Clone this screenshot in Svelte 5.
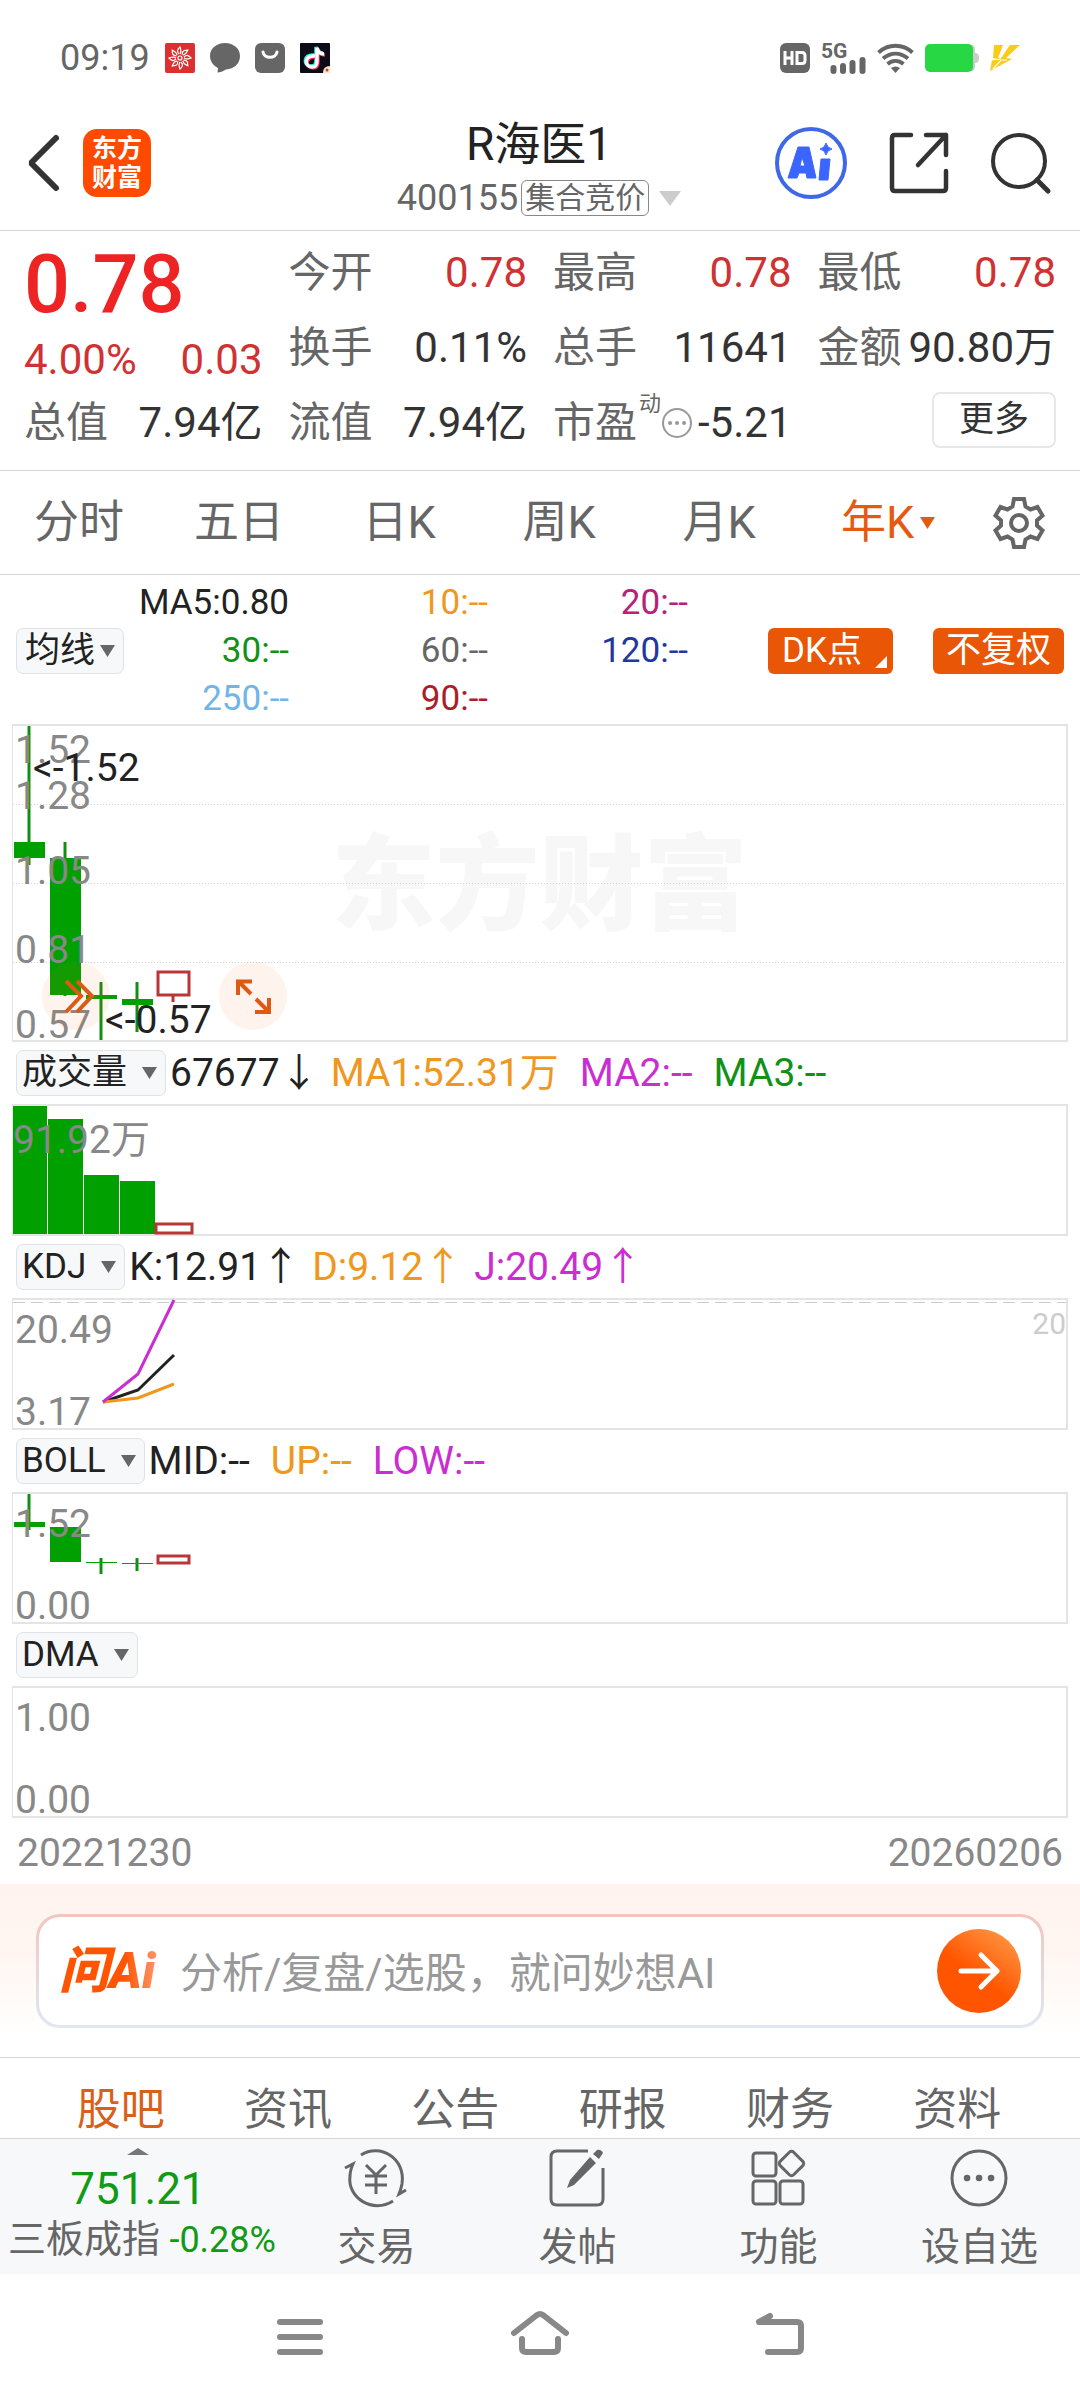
<script>
  let period = $state("年K");
  let section = $state("股吧");
  let question = $state("");

  const periods = ["分时", "五日", "日K", "周K", "月K", "年K"];
  const sections = ["股吧", "资讯", "公告", "研报", "财务", "资料"];

  const columns = [
    [
      { label: "今开", value: "0.78", up: true },
      { label: "换手", value: "0.11%" },
      { label: "流值", value: "7.94亿" },
    ],
    [
      { label: "最高", value: "0.78", up: true },
      { label: "总手", value: "11641" },
      { label: "市盈", value: "-5.21", dynamic: true },
    ],
    [
      { label: "最低", value: "0.78", up: true },
      { label: "金额", value: "90.80万" },
    ],
  ];

  const averages = [
    { text: "MA5:0.80", tone: "black" },
    { text: "10:--", tone: "orange" },
    { text: "20:--", tone: "plum" },
    { text: "30:--", tone: "green" },
    { text: "60:--", tone: "gray" },
    { text: "120:--", tone: "navy" },
    { text: "250:--", tone: "sky" },
    { text: "90:--", tone: "crimson" },
  ];

  const overlays = ["均线", "BOLL"];
  const indicators = ["成交量", "KDJ", "BOLL", "DMA"];

  let overlay = $state("均线");
  let panels = $state([
    {
      name: "成交量",
      top: "91.92万",
      values: [
        { text: "67677", arrow: "↓", tone: "black" },
        { text: "MA1:52.31万", tone: "orange" },
        { text: "MA2:--", tone: "magenta" },
        { text: "MA3:--", tone: "green" },
      ],
      bars: [
        { x: 0, y: 0, w: 34 },
        { x: 35, y: 13, w: 35 },
        { x: 71, y: 69, w: 35 },
        { x: 107, y: 75, w: 35 },
      ],
    },
    {
      name: "KDJ",
      top: "20.49",
      bottom: "3.17",
      values: [
        { text: "K:12.91", arrow: "↑", tone: "black" },
        { text: "D:9.12", arrow: "↑", tone: "orange" },
        { text: "J:20.49", arrow: "↑", tone: "magenta" },
      ],
      lines: [
        { points: "90,102 125,90 161,55", tone: "black" },
        { points: "90,102 125,98 161,84", tone: "orange" },
        { points: "90,102 125,74 161,0", tone: "magenta" },
      ],
    },
    {
      name: "BOLL",
      top: "1.52",
      bottom: "0.00",
      values: [
        { text: "MID:--", tone: "black" },
        { text: "UP:--", tone: "orange" },
        { text: "LOW:--", tone: "magenta" },
      ],
      candles: [
        { x: 1, open: 28, close: 33, high: 0, low: 36 },
        { x: 37, open: 33, close: 68, high: 33, low: 68 },
        { x: 73, open: 68, close: 69, high: 64, low: 80 },
        { x: 109, open: 69, close: 70, high: 64, low: 77 },
        { x: 144, open: 61, close: 70, high: 61, low: 70, up: true },
      ],
    },
    { name: "DMA", top: "1.00", bottom: "0.00", values: [] },
  ]);

  const candles = [
    { x: 1, open: 116, close: 132, high: 0, low: 139 },
    { x: 37, open: 132, close: 269, high: 116, low: 270 },
    { x: 73, open: 269, close: 273, high: 256, low: 314 },
    { x: 109, open: 273, close: 279, high: 256, low: 306 },
    { x: 144, open: 245, close: 270, high: 245, low: 276, up: true },
  ];
</script>

{#snippet triangle()}
  <svg class="triangle" width="15" height="12" viewBox="0 0 15 12" aria-hidden="true">
    <path d="M0 0h15L7.500 12z" fill="currentColor" />
  </svg>
{/snippet}

{#snippet candle(c)}
  {#if c.up}
    <path d="M{c.x + 16} {c.close}V{c.low}" class="wick up" />
    <rect x={c.x + 1} y={c.open + 1} width="31" height={c.close - c.open - 2} class="hollow" />
  {:else}
    <path d="M{c.x + 15} {c.high}V{c.low}" class="wick" />
    <rect x={c.x} y={c.open} width="31" height={c.close - c.open} class="solid" />
  {/if}
{/snippet}

<main>
  <div class="status">
    <div class="status-side">
      <span>09:19</span>
      <svg width="30" height="30" viewBox="0 0 30 30">
        <rect width="30" height="30" rx="2" fill="#dc3030" />
        <g fill="none" stroke="#fff" stroke-width="1.200">
          {#each [0, 45, 90, 135, 180, 225, 270, 315] as angle}
            <path d="M14 11c-3-3-1-5 1-7 1 3 2 4 0 7" transform="rotate({angle} 15 15)" />
          {/each}
          <circle cx="15" cy="15" r="2" />
        </g>
      </svg>
      <svg width="30" height="30" viewBox="0 0 30 30">
        <path d="M15 0c8.500 0 15 5.500 15 13s-6 13-14 13.500c-3 2-6 3-8.500 3l.5-4.500C3 22.500 0 18 0 13 0 5.500 6.500 0 15 0z" fill="#666" />
      </svg>
      <svg width="30" height="30" viewBox="0 0 30 30">
        <rect width="30" height="30" rx="6" fill="#666" />
        <path d="M8 9c1 7 13 7 14 0" fill="none" stroke="#fff" stroke-width="3" stroke-linecap="round" />
      </svg>
      <svg width="30" height="30" viewBox="0 0 30 30">
        <rect width="30" height="30" rx="1" fill="#0b0b18" />
        <g fill="none" stroke-width="3.500">
          <path d="M15 13c-11-1-11 11-3 11 4 0 5-2 5-6V5c1 4 3 6 7 6" stroke="#25f4ee" transform="translate(-1 -1)" />
          <path d="M15 13c-11-1-11 11-3 11 4 0 5-2 5-6V5c1 4 3 6 7 6" stroke="#fe2c55" transform="translate(1 1)" />
          <path d="M15 13c-11-1-11 11-3 11 4 0 5-2 5-6V5c1 4 3 6 7 6" stroke="#fff" />
        </g>
        <path d="M30 23v7h-7q0-7 7-7z" fill="#fde3c8" />
        <circle cx="27" cy="27" r="1.500" fill="#d04030" />
      </svg>
    </div>
    <div class="status-side right">
      <svg width="30" height="30" viewBox="0 0 30 30">
        <rect width="30" height="30" rx="6" fill="#666" />
        <path d="M5 8v14M12 8v14M5 15h7M17 9.500h5q3 0 3 3v5q0 3-3 3h-5z" fill="none" stroke="#fff" stroke-width="3" />
      </svg>
      <svg class="signal" width="45" height="31" viewBox="0 0 45 31">
        <text x="0" y="15" class="signal-text">5G</text>
        <path d="M12.500 25v3M22 23v5M31.500 20v8M41.500 17v11" stroke="#666" stroke-width="6" stroke-linecap="round" />
      </svg>
      <svg width="37" height="30" viewBox="0 0 37 30">
        <g fill="none" stroke="#666" stroke-width="4">
          <path d="M1.500 9.500c10-9 24-9 34 0" />
          <path d="M6 15.500c8-6.500 17-6.500 25 0" />
          <path d="M10.500 21c5-4 11-4 16 0" />
        </g>
        <path d="M14 25q4.500-3 9 0l-4.500 5z" fill="#666" />
      </svg>
      <svg width="54" height="28" viewBox="0 0 54 28">
        <path d="M46 1q4 0 4 5v3q4 0 4 5t-4 5v3q0 5-4 5z" fill="#ccc" />
        <rect width="48" height="28" rx="5" fill="#27d844" />
      </svg>
      <svg width="30" height="26" viewBox="0 0 30 26">
        <path d="M4 0h9L8 13l4-1L17 4l3-4h10L16 13l6 1L0 26 2 15l5-1-4-1z" fill="#facb18" />
        <path d="M1 15l9-1 4-13M3 24l8-9h6" fill="none" stroke="#fff" stroke-width="1.200" />
      </svg>
    </div>
  </div>

  <header>
    <div class="header-side">
      <button class="icon" aria-label="返回">
        <svg width="32" height="56" viewBox="0 0 32 56">
          <path d="M29 3L4 28l25 25" fill="none" stroke="#333" stroke-width="6" stroke-linecap="round" stroke-linejoin="bevel" />
        </svg>
      </button>
      <a class="brand" href="#home">东方<br />财富</a>
    </div>
    <div class="title">
      <h1>R海医1</h1>
      <p>
        400155<span class="auction">集合竞价</span>
        <svg width="22" height="15" viewBox="0 0 22 15"><path d="M0 0h22L11 15z" fill="#ccc" /></svg>
      </p>
    </div>
    <div class="header-side right">
      <button class="icon" aria-label="AI">
        <svg width="72" height="72" viewBox="0 0 72 72">
          <circle cx="36" cy="36" r="34" fill="none" stroke="#3e68e8" stroke-width="4" />
          <path d="M23 20h11l7 31h-9l-1-5h-7l-2 5h-9zm4 10-2 9h5zM46 32h9l-2 21h-9zM51 16q1 5 6 6-5 1-6 6-1-5-6-6 5-1 6-6z" fill="#3a66ff" stroke="#3a66ff" stroke-linejoin="round" fill-rule="evenodd" />
        </svg>
      </button>
      <button class="icon" aria-label="分享">
        <svg width="58" height="60" viewBox="0 0 58 60">
          <path d="M21 2H5Q2 2 2 5v50q0 3 3 3h48q3 0 3-3V38M36 2h20v20M56 2L28 32" fill="none" stroke="#333" stroke-width="4.500" stroke-linecap="round" stroke-linejoin="round" />
        </svg>
      </button>
      <button class="icon" aria-label="搜索">
        <svg width="60" height="60" viewBox="0 0 60 60">
          <circle cx="28" cy="28" r="26" fill="none" stroke="#333" stroke-width="4" />
          <path d="M46 47l11 11" stroke="#333" stroke-width="5" stroke-linecap="round" />
        </svg>
      </button>
    </div>
  </header>

  <section class="quote">
    <div class="quote-col">
      <strong class="price">0.78</strong>
      <div class="change"><span>4.00%</span><span>0.03</span></div>
      <div class="stat">
        <span class="stat-label">总值</span><span>7.94亿</span>
      </div>
    </div>
    {#each columns as column, i}
      <div class="quote-col">
        {#each column as stat}
          <div class="stat">
            <span class="stat-label">
              {stat.label}{#if stat.dynamic}<sup>动</sup>{/if}
            </span>
            {#if stat.dynamic}
              <svg class="hint" width="30" height="30" viewBox="0 0 30 30">
                <circle cx="15" cy="15" r="14" fill="none" stroke="#999" stroke-width="2" />
                <path d="M8 15h.1M15 15h.1M22 15h.1" stroke="#999" stroke-width="4" stroke-linecap="round" />
              </svg>
            {/if}
            <span class:up-text={stat.up}>{stat.value}</span>
          </div>
        {/each}
        {#if i == 2}
          <button class="more">更多</button>
        {/if}
      </div>
    {/each}
  </section>

  <nav class="periods">
    {#each periods as name}
      <button
        class="period {name == period ? 'period-active' : ''}"
        onclick={() => (period = name)}
      >
        {name}{#if name == "年K"}{@render triangle()}{/if}
      </button>
    {/each}
    <button class="period" aria-label="设置">
      <svg width="52" height="52" viewBox="0 0 52 52">
        <g fill="none" stroke="#666" stroke-width="4">
          <path d="M21 2h10l1.500 7.500 5 3L44.500 10l5 8.500-5.500 5v5l5.500 5-5 8.500-7-2.500-5 3L31 50H21l-1.500-7.500-5-3L7.500 42l-5-8.500 5.500-5v-5l-5.500-5 5-8.500 7 2.500 5-3z" />
          <circle cx="26" cy="26" r="8" />
        </g>
      </svg>
    </button>
  </nav>

  <div class="legend">
    <div class="picker">
      <select class="tight" aria-label="主图指标" bind:value={overlay}>
        {#each overlays as name}<option>{name}</option>{/each}
      </select>
      {@render triangle()}
    </div>
    <div class="averages">
      {#each averages as item}
        <span class={item.tone}>{item.text}</span>
      {/each}
    </div>
    <div class="legend-buttons">
      <button class="flag dk">
        DK点
        <svg width="12" height="12" viewBox="0 0 12 12"><path d="M12 0v12H0z" fill="#fff" /></svg>
      </button>
      <button class="flag">不复权</button>
    </div>
  </div>

  <div class="chart">
    <svg class="plot" width="100%" height="314">
      <text x="50%" y="196" text-anchor="middle" class="watermark">东方财富</text>
      {#each [78, 157, 236] as y}
        <line x1="0" x2="100%" y1={y + 0.5} y2={y + 0.5} class="grid" />
      {/each}
      {#each candles as c}
        {@render candle(c)}
      {/each}
      <text x="2" y="37">1.52</text>
      <text x="2" y="83">1.28</text>
      <text x="2" y="158">1.05</text>
      <text x="2" y="237">0.81</text>
      <text x="2" y="312">0.57</text>
      <text x="20" y="55" class="mark">&lt;-1.52</text>
      <text x="92" y="307" class="mark">&lt;-0.57</text>
    </svg>
    <button class="round forward" aria-label="前进">
      <svg width="68" height="68" viewBox="0 0 68 68">
        <path d="M24 19l15 15-15 16M35 19l15 15-15 16" />
      </svg>
    </button>
    <button class="round expand" aria-label="全屏">
      <svg width="68" height="68" viewBox="0 0 68 68">
        <path d="M33 19.500H19V33M19 19l13 13M36 50h14V36M50 50L37 37" />
      </svg>
    </button>
  </div>

  {#each panels as panel}
    <div class="panel-head">
      <div class="picker">
        <select aria-label="副图指标" bind:value={panel.name}>
          {#each indicators as name}<option>{name}</option>{/each}
        </select>
        {@render triangle()}
      </div>
      {#each panel.values as item}
        <span class={item.tone}>
          {item.text}{#if item.arrow}<span class="arrow">{item.arrow}</span>{/if}
        </span>
      {/each}
    </div>
    <div class="chart">
      <svg class="plot" width="100%" height="128">
        {#if panel.bars}
          {#each panel.bars as bar}
            <rect x={bar.x} y={bar.y} width={bar.w} height={128 - bar.y} class="solid" />
          {/each}
          <rect x="143" y="118" width="36" height="9" class="hollow" />
        {/if}
        {#if panel.lines}
          <line x1="0" x2="100%" y1="2.5" y2="2.5" class="dash" />
          <text x="100%" y="34" text-anchor="end" class="level">20</text>
          {#each panel.lines as line}
            <polyline points={line.points} class="line {line.tone}" />
          {/each}
        {/if}
        {#if panel.candles}
          {#each panel.candles as c}
            {@render candle(c)}
          {/each}
        {/if}
        <text x={panel.bars ? 0 : 2} y={panel.bars ? 47 : 43}>{panel.top}</text>
        {#if panel.bottom}<text x="2" y="125">{panel.bottom}</text>{/if}
      </svg>
    </div>
  {/each}

  <div class="dates"><span>20221230</span><span>20260206</span></div>

  <div class="ask">
    <form class="ask-form" onsubmit={(e) => e.preventDefault()}>
      <span class="ask-logo">问Ai</span>
      <input
        type="text"
        aria-label="问AI"
        placeholder="分析/复盘/选股，就问妙想AI"
        bind:value={question}
      />
      <button class="send" aria-label="发送">
        <svg width="42" height="38" viewBox="0 0 42 38">
          <path d="M3 19h36M23 3l16 16-16 16" fill="none" stroke="#fff" stroke-width="5" stroke-linecap="round" stroke-linejoin="round" />
        </svg>
      </button>
    </form>
  </div>

  <nav class="sections">
    {#each sections as name}
      <button
        class="section {name == section ? 'section-active' : ''}"
        onclick={() => (section = name)}>{name}</button
      >
    {/each}
  </nav>

  <div class="toolbar">
    <button class="index">
      <svg width="22" height="7" viewBox="0 0 22 7"><path d="M11 0l11 7H0z" fill="#777" /></svg>
      <span class="index-value">751.21</span>
      <span class="index-row">三板成指 <span class="index-change">-0.28%</span></span>
    </button>
    <button class="tool">
      <svg width="64" height="60" viewBox="0 0 64 60">
        <g fill="none" stroke="#666" stroke-width="3">
          <path d="M17 7C36-5 62 10 58 36q-1 5-3 10l7-4M49 53C29 66 3 50 6 28q0-5 3-12l-8 4" />
          <path d="M22 17l10 10 10-10M32 27v19M21 28h22M21 37h22" />
        </g>
      </svg>
      交易
    </button>
    <button class="tool">
      <svg width="56" height="60" viewBox="0 0 56 60">
        <path d="M39 3H8Q2 3 2 9v42q0 6 6 6h40q6 0 6-6V20" fill="none" stroke="#666" stroke-width="3" />
        <path d="M41 9l6 6-22 22-7 3 3-8zM44 6l4-4q4-1 6 3l-4 6z" fill="#666" />
      </svg>
      发帖
    </button>
    <button class="tool">
      <svg width="56" height="60" viewBox="0 0 56 60">
        <g fill="none" stroke="#666" stroke-width="3">
          <rect x="3" y="5" width="23" height="23" rx="3" />
          <rect x="3" y="33" width="23" height="23" rx="3" />
          <rect x="30" y="33" width="23" height="23" rx="3" />
          <rect x="32" y="6" width="19" height="19" rx="3" transform="rotate(45 41.500 15.500)" />
        </g>
      </svg>
      功能
    </button>
    <button class="tool">
      <svg width="58" height="60" viewBox="0 0 58 60">
        <circle cx="29" cy="30" r="27" fill="none" stroke="#666" stroke-width="3" />
        <path d="M17 30h.1M29 30h.1M41 30h.1" stroke="#666" stroke-width="6.500" stroke-linecap="round" />
      </svg>
      设自选
    </button>
  </div>

  <nav class="system">
    <button class="icon" aria-label="最近任务">
      <svg width="60" height="44" viewBox="0 0 60 44">
        <path d="M10 10h40M10 25h40M10 40h40" />
      </svg>
    </button>
    <button class="icon" aria-label="主屏幕">
      <svg width="60" height="44" viewBox="0 0 60 44">
        <path d="M4 21L27 3q3-2 6 0l23 18M12 27v9q0 4 4 4h28q4 0 4-4v-9" />
      </svg>
    </button>
    <button class="icon" aria-label="返回上一页">
      <svg width="60" height="44" viewBox="0 0 60 44">
        <path d="M20 4L9 10h38q4 0 4 4v22q0 4-4 4H18" />
      </svg>
    </button>
  </nav>
</main>

<style>
  :global(body) {
    margin: 0;
    background: #fff;
  }
  main {
    font-family: Roboto, "Noto Sans CJK SC", sans-serif;
    color: #333;
    background: #fff;
  }
  svg {
    display: block;
    flex: none;
    overflow: visible;
  }
  button,
  select,
  input {
    font: inherit;
    color: inherit;
    margin: 0;
    padding: 0;
    border: 0;
    background: none;
  }
  button {
    cursor: pointer;
  }

  .status {
    display: flex;
    justify-content: space-between;
    padding: 38px 60px 18px;
    color: #666;
    font-size: 36px;
    line-height: 40px;
  }
  .status-side {
    display: flex;
    align-items: center;
    gap: 15px;
  }
  .status-side.right {
    gap: 11px;
  }
  .signal-text {
    font-size: 21px;
    font-weight: 700;
    fill: #666;
  }

  header {
    display: grid;
    grid-template-columns: 1fr auto 1fr;
    align-items: center;
    padding: 12px 29px 12px 27px;
    border-bottom: 1px solid #d5d5d5;
  }
  .header-side {
    display: flex;
    align-items: center;
    gap: 24px;
  }
  .header-side.right {
    justify-content: flex-end;
    gap: 43px;
  }
  .brand {
    width: 68px;
    padding: 5px 0;
    border-radius: 14px;
    background: #ff4a00;
    color: #fff;
    font-size: 25px;
    line-height: 29px;
    font-weight: 700;
    text-align: center;
    text-decoration: none;
  }
  .title {
    padding-top: 8px;
  }
  h1 {
    margin: 0 0 6px;
    font-size: 46px;
    line-height: 56px;
    font-weight: 400;
    text-align: center;
    color: #222;
  }
  .title p {
    display: flex;
    align-items: center;
    margin: 0;
    color: #666;
    font-size: 36px;
    line-height: 40px;
  }
  .auction {
    margin: 0 10px 0 3px;
    padding: 0 3px;
    border: 1px solid #888;
    border-radius: 6px;
    font-size: 30px;
    line-height: 34px;
  }

  .quote {
    display: grid;
    grid-template-columns: repeat(4, 1fr);
    gap: 26px;
    padding: 4px 24px 10px;
    border-bottom: 1px solid #d5d5d5;
    font-size: 42px;
  }
  .price {
    display: block;
    color: #ee2424;
    font-size: 81px;
    line-height: 100px;
    font-weight: 500;
  }
  .change,
  .stat {
    display: flex;
    justify-content: space-between;
    line-height: 75px;
    white-space: nowrap;
  }
  .change {
    line-height: 50px;
  }
  .change,
  .up-text {
    color: #cf3232;
  }
  .stat {
    align-items: center;
  }
  .stat-label {
    color: #666;
  }
  sup {
    margin-left: 2px;
    font-size: 22px;
    line-height: 22px;
    vertical-align: 26px;
  }
  .hint {
    margin-right: 6px;
  }
  .more {
    display: block;
    margin: 7px 0 0 auto;
    padding: 0 25px;
    border: 2px solid #e6e8ea;
    border-radius: 8px;
    font-size: 35px;
    line-height: 52px;
  }

  .periods {
    display: grid;
    grid-template-columns: repeat(6, 4fr) 3fr;
    border-bottom: 1px solid #d5d5d5;
  }
  .period {
    display: flex;
    align-items: center;
    justify-content: center;
    gap: 6px;
    padding-right: 2px;
    color: #666;
    font-size: 45px;
    line-height: 103px;
  }
  .period-active {
    padding-left: 18px;
    color: #e65a10;
  }

  .black {
    color: #222;
  }
  .orange {
    color: #f0981e;
  }
  .plum {
    color: #b8207a;
  }
  .green {
    color: #119216;
  }
  .gray {
    color: #666;
  }
  .navy {
    color: #22389c;
  }
  .sky {
    color: #70b5ea;
  }
  .crimson {
    color: #ab1d28;
  }
  .magenta {
    color: #cb2ed0;
  }

  .legend {
    display: flex;
    align-items: center;
    padding: 4px 16px 1px;
    font-size: 35px;
  }
  .picker {
    position: relative;
  }
  .picker select {
    display: block;
    appearance: none;
    field-sizing: content;
    padding: 0 38px 0 5px;
    border: 1px solid #dfe2e6;
    border-radius: 7px;
    background: #f6f8fa;
    color: #222;
    font-size: 35px;
    line-height: 44px;
  }
  .picker select.tight {
    padding: 0 28px 0 8px;
  }
  .picker .triangle {
    position: absolute;
    right: 9px;
    top: 17px;
    color: #666;
    pointer-events: none;
  }
  .averages {
    display: grid;
    grid-template-columns: 165px 199px 200px;
    line-height: 48px;
    text-align: right;
  }
  .legend-buttons {
    display: flex;
    gap: 40px;
    margin-left: auto;
  }
  .flag {
    display: flex;
    padding: 0 13px;
    border-radius: 6px;
    background: #e85606;
    color: #fff;
    line-height: 46px;
  }
  .dk {
    align-items: flex-end;
    gap: 13px;
    padding: 0 6px 0 14px;
  }
  .dk svg {
    margin-bottom: 6px;
  }

  .chart {
    position: relative;
    margin: 0 12px;
    border: 2px solid #e4e4e4;
    border-left-width: 1px;
  }
  .plot text {
    fill: #888;
    font-size: 39px;
  }
  .plot .watermark {
    fill: #f7f7f7;
    font-size: 104px;
    font-weight: 900;
  }
  .plot .mark {
    fill: #222;
  }
  .plot .level {
    fill: #ccc;
    font-size: 30px;
  }
  .grid {
    stroke: #d4d4d4;
    stroke-dasharray: 1 2;
  }
  .dash {
    stroke: #ccc;
    stroke-dasharray: 12 6;
  }
  .solid {
    fill: #00a000;
  }
  .hollow {
    fill: #fff;
    stroke: #b93636;
    stroke-width: 3;
  }
  .wick {
    stroke: #109010;
    stroke-width: 3;
  }
  .wick.up {
    stroke: #b93636;
  }
  .line {
    fill: none;
    stroke: currentColor;
    stroke-width: 3;
  }
  .round {
    position: absolute;
    top: 236px;
    border-radius: 50%;
    background: rgba(255, 100, 20, 0.08);
  }
  .round path {
    fill: none;
    stroke: #dc5a14;
    stroke-width: 4;
  }
  .forward {
    left: 29px;
  }
  .expand {
    left: 206px;
  }

  .panel-head {
    display: flex;
    align-items: center;
    gap: 21px;
    padding: 8px 16px;
    font-size: 39px;
    line-height: 46px;
    white-space: nowrap;
  }
  .panel-head .picker {
    margin-right: -17px;
  }
  .arrow {
    margin-right: -9px;
  }

  .dates {
    display: flex;
    justify-content: space-between;
    padding: 10px 17px 6px;
    color: #888;
    font-size: 39px;
    line-height: 50px;
  }

  .ask {
    padding: 30px 36px 29px;
    border-bottom: 1px solid #d5d5d5;
    background: linear-gradient(#fff3ee, #fff6f2 40%, #fff 90%);
  }
  .ask-form {
    display: flex;
    align-items: center;
    padding: 12px 20px;
    border: 3px solid transparent;
    border-radius: 24px;
    background:
      linear-gradient(#fff, #fff) padding-box,
      linear-gradient(#f2c6bc, #dfe8f2) border-box;
  }
  .ask-logo {
    width: 108px;
    margin-right: 13px;
    background: linear-gradient(90deg, #ff5400 60%, #ffa888);
    background-clip: text;
    color: transparent;
    font-size: 50px;
    line-height: 60px;
    font-style: italic;
    font-weight: 900;
  }
  .ask-form input {
    flex: 1;
    min-width: 0;
    padding-top: 6px;
    font-size: 42px;
    line-height: 60px;
    outline: none;
  }
  .ask-form input::placeholder {
    color: #999;
    opacity: 1;
  }
  .send {
    padding: 23px 21px;
    border-radius: 50%;
    background: linear-gradient(215deg, #ff9440 10%, #ff5500 55%);
  }

  .sections {
    display: grid;
    grid-template-columns: repeat(6, 1fr);
    padding: 24px 39px 0 37px;
  }
  .section {
    color: #666;
    font-size: 44px;
    line-height: 56px;
  }
  .section-active {
    color: #d9601a;
  }

  .toolbar {
    display: grid;
    grid-template-columns: 275fr repeat(4, 201fr);
    border-top: 1px solid #d5d5d5;
    background: #f6f8fa;
    color: #666;
  }
  .index {
    display: flex;
    flex-direction: column;
    align-items: center;
    padding-top: 9px;
    white-space: nowrap;
  }
  .index-value {
    margin-top: 10px;
    color: #119a16;
    font-size: 44px;
    line-height: 48px;
  }
  .index-row {
    padding: 3px 0 0 8px;
    font-size: 38px;
    line-height: 46px;
  }
  .index-change {
    color: #119a16;
    font-size: 36px;
  }
  .tool {
    display: flex;
    flex-direction: column;
    align-items: center;
    gap: 16px;
    padding: 9px 0 3px;
    font-size: 39px;
    line-height: 47px;
  }

  .system {
    display: flex;
    justify-content: center;
    gap: 180px;
    padding: 38px 0 44px;
  }
  .system path {
    fill: none;
    stroke: #888;
    stroke-width: 6;
    stroke-linecap: round;
    stroke-linejoin: round;
  }
</style>
